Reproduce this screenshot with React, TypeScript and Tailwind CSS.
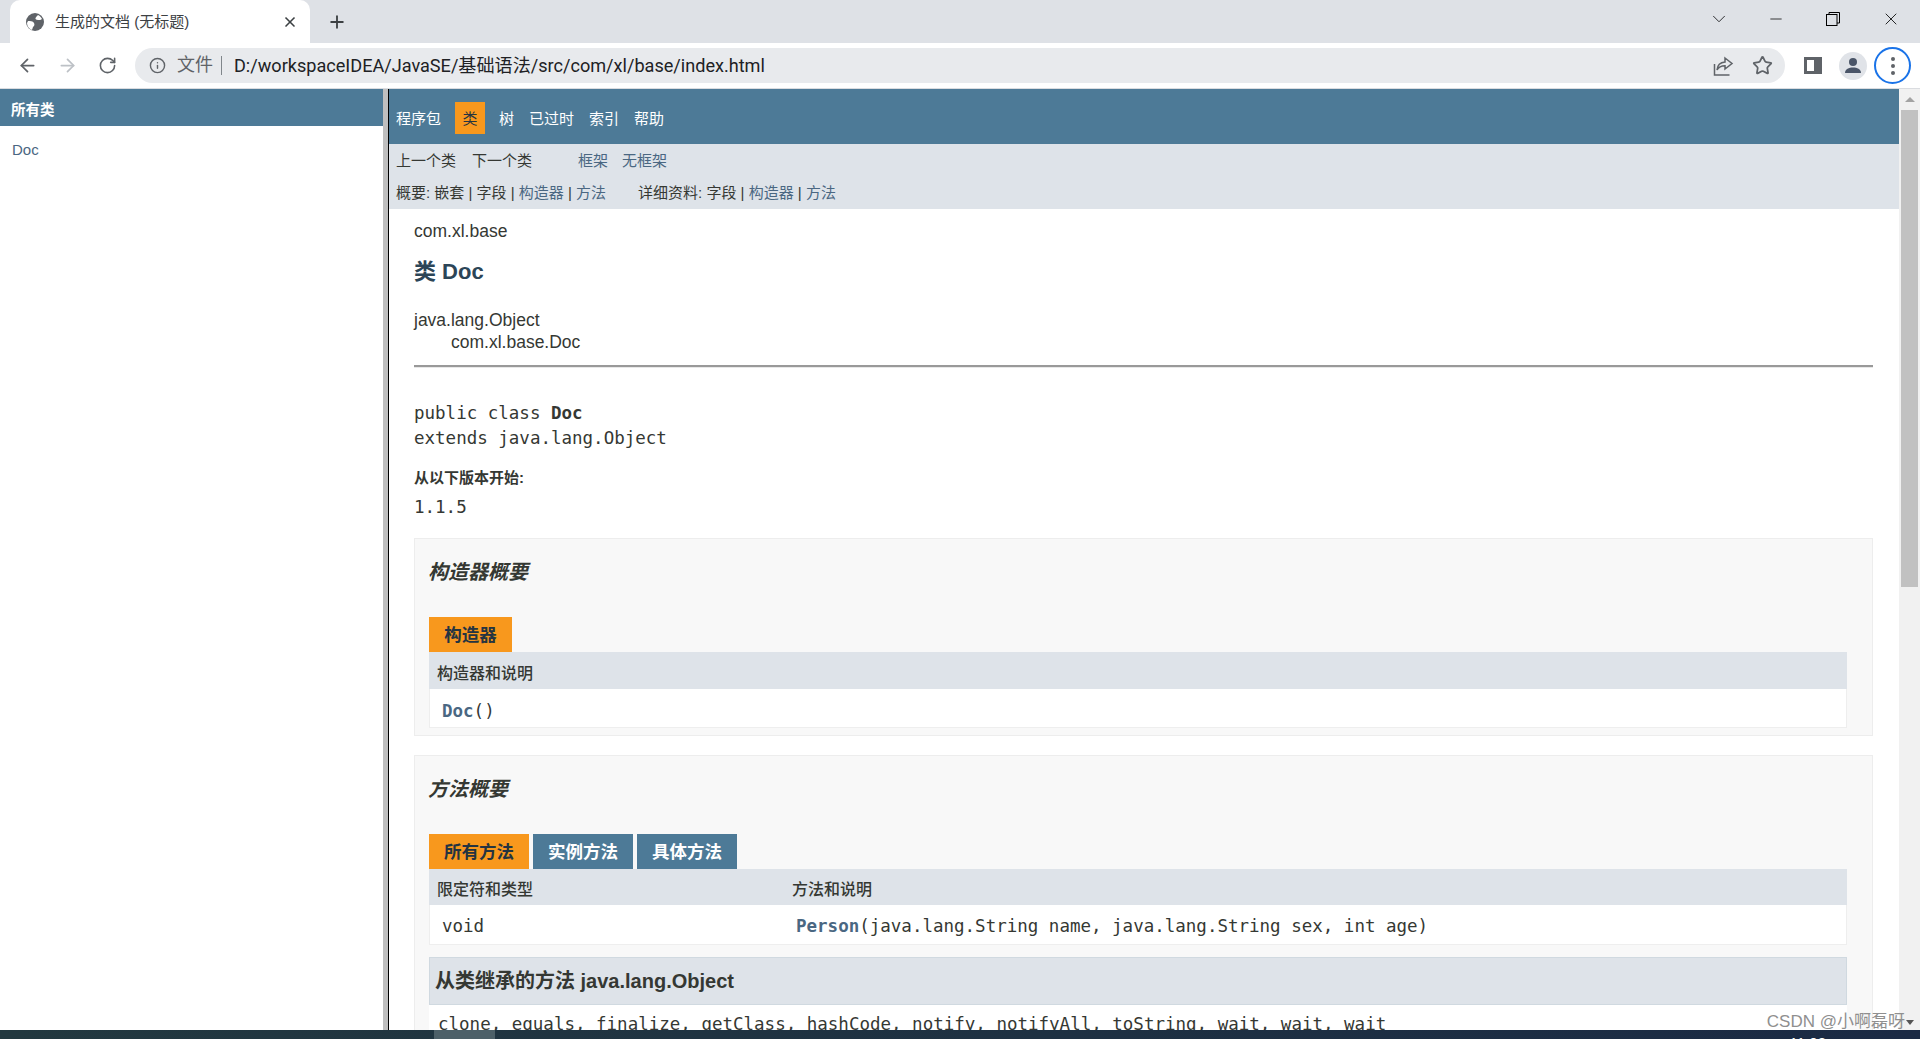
import React from "react";
import { ArrowLeft, ArrowRight, ChevronDown, Info, Minus, Plus, RotateCw, Star, X } from "lucide-react";

const mono = "font-['DejaVu_Sans_Mono',monospace] text-[17.5px]";

function Globe() {
  return (
    <svg width="20" height="20" viewBox="0 0 20 20" className="shrink-0">
      <circle cx="10" cy="10" r="9" fill="#5f6368" />
      <path d="M13 3c-1 1-2 2-2.500 3s1 2 2.500 2 3 0 4-1c-1-2-2-3-4-4zM3 9c2 0 5 0 6 2s0 3-1 4l-1 3c-3-1-5-4-5-7z" fill="#fff" />
    </svg>
  );
}

function ShareIcon() {
  return (
    <svg width="22" height="22" viewBox="0 0 22 22" fill="none" stroke="#5f6368" strokeWidth="1.5">
      <path d="M2.500 9v11h15" />
      <path d="M13 3l7 5.500-7 5.500v-3.200c-4 0-6.500 1.400-8 4.200 .4-4.600 3.200-7.600 8-8z" />
    </svg>
  );
}

function RestoreIcon() {
  return (
    <svg width="14" height="14" viewBox="0 0 14 14" fill="none" stroke="#000" strokeWidth="1">
      <rect x="0.5" y="2.5" width="10.5" height="11" />
      <path d="M3 2.500V0.500h10.500V11H11" />
    </svg>
  );
}

function TabStrip() {
  return (
    <div className="flex h-[43px] items-end bg-[#dee1e6]">
      <div className="ml-[10px] flex h-[43px] w-[300px] items-center rounded-t-[10px] bg-white pl-[15px] pr-[12px]">
        <Globe />
        <span className="ml-[10px] flex-1 pt-[2px] text-[15px] text-[#3c4043]">生成的文档 (无标题)</span>
        <X size={16} strokeWidth={2.5} color="#3c4043" />
      </div>
      <div className="ml-[17px] flex h-[43px] items-center">
        <Plus size={20} strokeWidth={2.2} color="#3c4043" />
      </div>
      <div className="flex-1" />
      <div className="flex h-[37px] items-center self-start">
        <ChevronDown size={22} strokeWidth={1} color="#202124" />
        <div className="ml-[35px] flex w-[22px] justify-center">
          <Minus size={18} strokeWidth={1} color="#000" />
        </div>
        <div className="ml-[35px] flex w-[22px] justify-center">
          <RestoreIcon />
        </div>
        <div className="ml-[36px] mr-[18px] flex w-[22px] justify-center">
          <X size={20} strokeWidth={1} color="#000" />
        </div>
      </div>
    </div>
  );
}

function Toolbar() {
  return (
    <div className="flex h-[46px] items-center border-b border-[#dadce0] bg-white">
      <div className="ml-[15px] flex w-[24px] justify-center">
        <ArrowLeft size={21} color="#5f6368" />
      </div>
      <div className="ml-[16px] flex w-[24px] justify-center">
        <ArrowRight size={21} color="#bdc1c6" />
      </div>
      <div className="ml-[16px] flex w-[24px] justify-center">
        <RotateCw size={19} color="#5f6368" />
      </div>
      <div className="ml-[16px] flex h-[35px] w-[1650px] items-center rounded-full bg-[#e8eaed] pl-[14px] pr-[12px]">
        <Info size={17} color="#5f6368" />
        <span className="ml-[11px] text-[18px] text-[#5f6368]">文件</span>
        <div className="ml-[8px] mr-[12px] h-[19px] w-px bg-[#80868b]" />
        <span className="flex-1 font-['Roboto','Noto_Sans_CJK_SC',sans-serif] text-[18.1px] text-[#202124]">
          D:/workspaceIDEA/JavaSE/基础语法/src/com/xl/base/index.html
        </span>
        <ShareIcon />
        <Star size={21} color="#5f6368" className="ml-[18px]" />
      </div>
      <div className="ml-[19px] h-[17px] w-[18px] border-[3px] border-r-[8px] border-[#5f6368] bg-white" />
      <div className="ml-[17px] flex h-[28px] w-[28px] items-center justify-center rounded-full bg-[#e0e3e8]">
        <svg width="18" height="18" viewBox="0 0 18 18" fill="#4a5568">
          <circle cx="9" cy="5" r="4" />
          <path d="M1 16c0-4 4-5.500 8-5.500s8 1.500 8 5.500z" />
        </svg>
      </div>
      <div className="ml-[7px] flex h-[37px] w-[37px] flex-col items-center justify-center gap-[3px] rounded-full border-[2px] border-[#1a73e8]">
        <div className="h-[4px] w-[4px] rounded-full bg-[#5f6368]" />
        <div className="h-[4px] w-[4px] rounded-full bg-[#5f6368]" />
        <div className="h-[4px] w-[4px] rounded-full bg-[#5f6368]" />
      </div>
    </div>
  );
}

function TopNav() {
  return (
    <div className="flex h-[55px] shrink-0 items-start bg-[#4d7a97] pl-[7px] pt-[13px] text-[15px] text-white">
      <span className="h-[32px] pt-[1px] leading-[32px]">程序包</span>
      <span className="ml-[14px] h-[32px] w-[30px] bg-[#f8981d] pt-[1px] text-center leading-[31px] text-[#253441]">类</span>
      <span className="ml-[14px] h-[32px] pt-[1px] leading-[32px]">树</span>
      <span className="ml-[15px] h-[32px] pt-[1px] leading-[32px]">已过时</span>
      <span className="ml-[15px] h-[32px] pt-[1px] leading-[32px]">索引</span>
      <span className="ml-[15px] h-[32px] pt-[1px] leading-[32px]">帮助</span>
    </div>
  );
}

function SubNav() {
  return (
    <div className="h-[65px] shrink-0 bg-[#dee3e9] pl-[7px] text-[15px] text-[#353833]">
      <div className="flex h-[32px] items-center pt-[2px]">
        <span>上一个类</span>
        <span className="ml-[16px]">下一个类</span>
        <span className="ml-[46px] text-[#4a6782]">框架</span>
        <span className="ml-[14px] text-[#4a6782]">无框架</span>
      </div>
      <div className="flex h-[33px] items-center whitespace-pre pt-[1px]">
        <span>概要: 嵌套 | 字段 | <span className="text-[#4a6782]">构造器</span> | <span className="text-[#4a6782]">方法</span></span>
        <span className="ml-[32px]">详细资料: 字段 | <span className="text-[#4a6782]">构造器</span> | <span className="text-[#4a6782]">方法</span></span>
      </div>
    </div>
  );
}

function ClassHeader() {
  return (
    <>
      <div className="pt-[11px] text-[17.5px] leading-[22px]">com.xl.base</div>
      <h2 className="mt-[17px] text-[22px] font-bold leading-[26px] text-[#2c4557]">类 Doc</h2>
      <div className="mt-[24px] text-[17.5px] leading-[22px]">java.lang.Object</div>
      <div className="pl-[37px] text-[17.5px] leading-[22px]">com.xl.base.Doc</div>
      <div className="mt-[12px] h-[3px] border-b border-b-[#e8e8e8] bg-[#999]" />
      <div className={`mt-[33px] leading-[25px] ${mono}`}>
        public class <b>Doc</b>
      </div>
      <div className={`leading-[25px] ${mono}`}>extends java.lang.Object</div>
      <div className="mt-[17px] text-[15px] font-bold leading-[20px]">从以下版本开始:</div>
      <div className={`mt-[7px] leading-[25px] ${mono}`}>1.1.5</div>
    </>
  );
}

function ConstructorSummary() {
  return (
    <section className="mt-[18px] h-[198px] border border-[#ededed] bg-[#f8f8f8] px-[14px]">
      <h3 className="-ml-px pt-[20px] text-[20px] font-bold italic leading-[26px]">构造器概要</h3>
      <div className="mt-[32px] flex h-[35px] w-[83px] items-center justify-center bg-[#f8981d] pt-[2px] text-[17.5px] font-bold text-[#253441]">
        构造器
      </div>
      <div className="mr-[11px] flex h-[37px] items-center bg-[#dee3e9] pl-[8px] pt-[6px] text-[16px] font-medium">构造器和说明</div>
      <div className={`mr-[11px] flex h-[39px] items-center border-x border-b border-[#eeeeee] bg-white pl-[12px] pt-[6px] ${mono}`}>
        <b className="text-[#4a6782]">Doc</b>()
      </div>
    </section>
  );
}

function MethodSummary() {
  return (
    <section className="mt-[19px] h-[400px] border border-[#ededed] bg-[#f8f8f8] px-[14px]">
      <h3 className="-ml-px pt-[20px] text-[20px] font-bold italic leading-[26px]">方法概要</h3>
      <div className="mt-[32px] flex h-[35px] gap-[4px] pt-0 text-[17.5px] font-bold text-white">
        <div className="flex w-[100px] items-center justify-center bg-[#f8981d] pt-[2px] text-[#253441]">所有方法</div>
        <div className="flex w-[100px] items-center justify-center bg-[#4d7a97] pt-[2px]">实例方法</div>
        <div className="flex w-[100px] items-center justify-center bg-[#4d7a97] pt-[2px]">具体方法</div>
      </div>
      <div className="mr-[11px] flex h-[36px] items-center bg-[#dee3e9] pl-[8px] pt-[5px] text-[16px] font-medium">
        <span className="w-[355px]">限定符和类型</span>
        <span>方法和说明</span>
      </div>
      <div className={`mr-[11px] flex h-[40px] items-center border-x border-b border-[#eeeeee] bg-white pl-[12px] pt-[4px] ${mono}`}>
        <span className="w-[354px]">void</span>
        <span>
          <b className="text-[#4a6782]">Person</b>(java.lang.String name, java.lang.String sex, int age)
        </span>
      </div>
      <div className="mr-[11px] mt-[12px] flex h-[48px] items-center border border-[#d0d9e0] bg-[#dee3e9] pb-[1px] pl-[5px] text-[20px] font-bold">
        从类继承的方法 java.lang.Object
      </div>
      <div className={`mr-[11px] bg-white pl-[9px] pt-[7px] leading-[25px] ${mono}`}>
        clone, equals, finalize, getClass, hashCode, notify, notifyAll, toString, wait, wait, wait
      </div>
    </section>
  );
}

function Scrollbar() {
  return (
    <div className="flex w-[21px] shrink-0 flex-col items-center bg-[#f1f1f1]">
      <div className="mt-[8px] h-0 w-0 border-x-[5px] border-b-[5px] border-x-transparent border-b-[#a3a3a3]" />
      <div className="mt-[8px] h-[477px] w-[17px] bg-[#c1c1c1]" />
    </div>
  );
}

export default function App() {
  return (
    <div className="relative flex h-[1039px] w-[1920px] flex-col overflow-hidden bg-white font-['Liberation_Sans','Noto_Sans_CJK_SC',sans-serif] text-[#353833]">
      <TabStrip />
      <Toolbar />
      <div className="flex min-h-0 flex-1">
        <aside className="w-[383px] shrink-0">
          <div className="flex h-[37px] items-center bg-[#4d7a97] pl-[11px] pt-[7px] text-[14.5px] font-bold text-white">所有类</div>
          <div className="pl-[12px] pt-[13px] text-[15px] leading-[22px] text-[#4a6782]">Doc</div>
        </aside>
        <div className="w-[5px] shrink-0 bg-[#bfbfbf]" />
        <div className="w-px shrink-0 bg-black" />
        <main className="flex min-w-0 flex-1 flex-col overflow-hidden">
          <TopNav />
          <SubNav />
          <div className="pl-[25px] pr-[26px]">
            <ClassHeader />
            <ConstructorSummary />
            <MethodSummary />
          </div>
        </main>
        <Scrollbar />
      </div>
      <div className="flex h-[9px] shrink-0 overflow-hidden bg-linear-to-r from-[#22383f] to-[#1b2a44]">
        <div className="w-[434px]" />
        <div className="w-[61px] bg-[#4d6068]" />
        <div className="flex-1" />
        <div className="mr-[94px] mt-[4px] text-[15px] leading-[18px] text-white">11:03</div>
      </div>
      <div className="absolute bottom-[7px] right-[6px] flex items-center gap-[1px] text-[17px] leading-[20px] text-[#8f8f8f]">
        <span>CSDN @小啊磊呀</span>
        <span className="h-0 w-0 border-x-[4px] border-t-[5px] border-x-transparent border-t-[#555]" />
      </div>
    </div>
  );
}
